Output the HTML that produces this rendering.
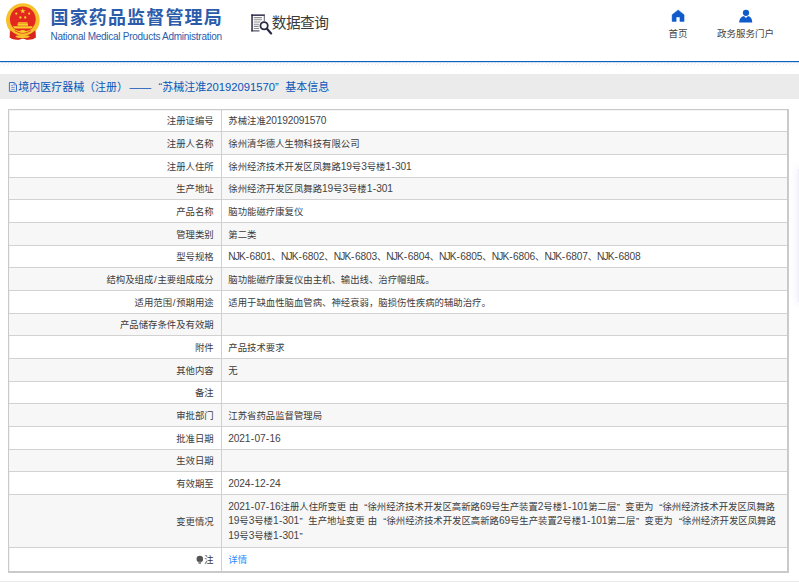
<!DOCTYPE html>
<html lang="zh-CN">
<head>
<meta charset="utf-8">
<title>国家药品监督管理局 数据查询</title>
<style>
html,body{margin:0;padding:0;}
body{width:799px;height:582px;position:relative;overflow:hidden;background:#fff;font-family:"Liberation Sans","Noto Sans CJK SC",sans-serif;color:#3a3a3a;}
.abs{position:absolute;white-space:nowrap;}
#title{left:50.5px;top:6.2px;font-size:18px;font-weight:bold;color:#2b5caa;line-height:24px;letter-spacing:1.15px;}
#sub{left:50.6px;top:31px;font-size:10px;color:#2b5caa;line-height:12px;letter-spacing:-0.265px;}
#dq{left:271.8px;top:12.5px;font-size:14.7px;letter-spacing:-0.55px;color:#3a3a3a;line-height:20px;}
.nav{font-size:9.5px;color:#444;line-height:12px;text-align:center;}
#blueline{left:0;top:61px;width:799px;height:1px;background:#0e5fbf;box-shadow:0 1px 0 rgba(14,95,191,0.2);}
#hatch{left:0;top:62px;}
#bar{left:0;top:74px;width:799px;height:25px;background:#ebebeb;}
.bt{top:79px;font-size:10.97px;line-height:16px;color:#0a56b8;}
#tbl{left:8px;top:109px;width:781px;height:464px;box-sizing:border-box;border-style:solid;border-color:#cbc9cb;border-width:1px 2px 2px 1px;box-shadow:inset 1px 1px 0 #f3f3f3;}
.row{position:absolute;left:9px;width:778px;box-sizing:border-box;border-top:1px solid #d2d2d2;}
.row.alt{background:#f7f7f7;}
.lab{position:absolute;left:0;width:204.7px;text-align:right;font-size:9.4px;white-space:nowrap;color:#3b3b3b;}
.val{position:absolute;left:219.3px;font-size:9.4px;white-space:nowrap;color:#3b3b3b;}
#vline{left:221px;top:109px;width:1px;height:462px;background:#d0d0d0;}
.n{font-size:10.2px;letter-spacing:-0.17px;color:#444;}
.l{font-size:10.2px;letter-spacing:-0.85px;color:#444;}
.l + .n .h{margin:0 0.7px;}
.h{font-style:normal;margin:0 0.45px;}
.sl{font-size:9.8px;margin:0 0.7px;}
.ql{padding-left:3px;}
.qr{padding-left:0.5px;padding-right:2.4px;}
#side{left:798px;top:169px;width:20px;height:133px;background:#efeffb;box-shadow:0 0 8px rgba(90,90,200,0.13);}
#botline{left:0;top:581px;width:799px;height:1px;background:#ebebeb;}
</style>
</head>
<body>
<svg class="abs" style="left:4px;top:1px" width="40" height="42" viewBox="0 0 40 42">
<path d="M6 28.5 L5.7 36.6 L9 38.2 L14.5 38.7 L18.8 37.6 L23.1 38.7 L28.6 38.2 L31.7 36.6 L31.5 28.5 Z" fill="#d8241c"/>
<circle cx="18.85" cy="19.1" r="16.85" fill="#f6c12a"/>
<path d="M6.6 29.5 Q18.8 40 31 29.5 L31.6 36.4 L28.6 38 L23.1 38.5 L18.8 37.4 L14.5 38.5 L9 38 L5.8 36.4 Z" fill="#d8241c"/>
<circle cx="18.8" cy="18.3" r="12.9" fill="#e3291f"/>
<polygon points="18.8,7.1 19.5,9.2 21.7,9.2 19.9,10.5 20.6,12.6 18.8,11.3 17,12.6 17.7,10.5 15.9,9.2 18.1,9.2" fill="#f8cf2c"/>
<circle cx="12.3" cy="12.6" r="1.15" fill="#f8cf2c"/><circle cx="25.2" cy="12.6" r="1.15" fill="#f8cf2c"/>
<circle cx="16.4" cy="16.5" r="1.15" fill="#f8cf2c"/><circle cx="21.2" cy="16.5" r="1.15" fill="#f8cf2c"/>
<path d="M14.5 21.2 h8.6 l0.9 1.3 h-10.4 z M13.6 22.8 h10.4 v2 h-10.4 z M9 25.3 h19.6 l-1.2 2.1 h-17.2 z" fill="#f8cf2c"/>
<path d="M7.4 25.6 Q18.8 40.5 30.2 25.6 L28.4 27.9 Q18.8 32.4 9.2 27.9 Z" fill="#f6c12a"/>
<path d="M10.6 29.6 Q18.8 35 27 29.6" fill="none" stroke="#e0301f" stroke-width="0.8"/>
<path d="M15.4 30.4 q3.4 -2.6 6.8 0 q-3.4 2.4 -6.8 0z" fill="#f8cf2c"/>
<ellipse cx="18.6" cy="35.6" rx="7.2" ry="1.5" fill="#f6c12a"/>
<ellipse cx="18.6" cy="35.6" rx="2.2" ry="1.9" fill="#f6c12a"/>
</svg>
<div class="abs" id="title">国家药品监督管理局</div>
<div class="abs" id="sub">National Medical Products Administration</div>
<svg class="abs" style="left:250px;top:13px" width="24" height="23" viewBox="0 0 24 23">
<rect x="1.3" y="1.4" width="1.5" height="17" fill="#2b2b47"/>
<rect x="1.3" y="1.4" width="13.3" height="1.5" fill="#2b2b47"/>
<rect x="13.8" y="1.4" width="0.9" height="6.6" fill="#4a4a5e"/>
<rect x="1.3" y="17.4" width="8.2" height="1" fill="#2b2b47"/>
<path d="M3.8 4.6 h8.1 M3.8 6.8 h8.1 M3.8 9 h6.6 M3.8 11.2 h5.2 M3.8 13.4 h4.9 M3.8 15.5 h5.4" stroke="#8e8e8e" stroke-width="1.1"/>
<circle cx="14.1" cy="12.7" r="3.65" fill="#fff" stroke="#2b2b47" stroke-width="1.8"/>
<path d="M17 15.8 L21.1 20.4" stroke="#2b2b47" stroke-width="2.3" stroke-linecap="round"/>
</svg>
<div class="abs" id="dq">数据查询</div>
<svg class="abs" style="left:671px;top:9px" width="14" height="14" viewBox="0 0 14 14">
<path d="M7.1 0.9 L13.1 5.7 V12.5 H8.9 V8.1 H5.2 V12.5 H1.1 V5.7 Z" fill="#0f5bcb" stroke="#0f5bcb" stroke-width="0.4" stroke-linejoin="round"/>
</svg>
<div class="abs nav" style="left:648px;width:60px;top:28px">首页</div>
<svg class="abs" style="left:738px;top:8px" width="16" height="16" viewBox="0 0 16 16">
<circle cx="8" cy="4.8" r="3.15" fill="#0f5bcb"/>
<path d="M1.1 14.5 Q1.6 8.6 5.9 7.9 L8 10 L10 7.9 Q14 8.6 14.3 14.5 Z" fill="#0f5bcb"/>
</svg>
<div class="abs nav" style="left:705.6px;width:80px;top:28px">政务服务门户</div>
<div class="abs" id="blueline"></div><svg class="abs" id="hatch" width="799" height="4" viewBox="0 0 799 4"><defs><pattern id="hp" width="3.4" height="4" patternUnits="userSpaceOnUse"><path d="M0.4 3.4 L2.6 1" stroke="#e2e2e2" stroke-width="0.7" fill="none"/></pattern></defs><rect width="799" height="4" fill="url(#hp)"/></svg>
<div class="abs" id="bar"></div>
<svg class="abs" style="left:8px;top:81px" width="10" height="12" viewBox="0 0 10 12">
<path d="M1.4 1.5 H6.1 L8.5 3.9 V10.4 H1.4 Z" fill="none" stroke="#3a72d2" stroke-width="1"/>
<path d="M6 1.6 V4 H8.4" fill="none" stroke="#3a72d2" stroke-width="0.7"/>
<path d="M3.2 4.4 h2 M3.2 6.4 h3.6 M3.2 8.4 h3.6" stroke="#5a7fd0" stroke-width="0.8"/>
</svg>
<div class="abs bt" style="left:18.3px">境内医疗器械（注册）</div><div class="abs bt" style="left:129.4px">——</div><div class="abs bt" style="left:158.6px">“苏械注准<span style="font-size:11.25px">20192091570</span>”</div><div class="abs bt" style="left:285.3px">基本信息</div>
<div class="abs" id="tbl"></div>
<div class="row" style="top:109px;height:22px;border-top-color:transparent;"><div class="lab" style="top:0;line-height:22px">注册证编号</div><div class="val" style="top:0;line-height:22px">苏械注准<span class="n">20192091570</span></div></div>
<div class="row alt" style="top:131px;height:23px;"><div class="lab" style="top:0;line-height:23px">注册人名称</div><div class="val" style="top:0;line-height:23px">徐州清华德人生物科技有限公司</div></div>
<div class="row" style="top:154px;height:23px;"><div class="lab" style="top:0;line-height:23px">注册人住所</div><div class="val" style="top:0;line-height:23px">徐州经济技术开发区凤舞路<span class="n">19</span>号<span class="n">3</span>号楼<span class="n">1<i class="h">-</i>301</span></div></div>
<div class="row alt" style="top:177px;height:22px;"><div class="lab" style="top:0;line-height:22px">生产地址</div><div class="val" style="top:0;line-height:22px">徐州经济开发区凤舞路<span class="n">19</span>号<span class="n">3</span>号楼<span class="n">1<i class="h">-</i>301</span></div></div>
<div class="row" style="top:199px;height:23px;"><div class="lab" style="top:0;line-height:23px">产品名称</div><div class="val" style="top:0;line-height:23px">脑功能磁疗康复仪</div></div>
<div class="row alt" style="top:222px;height:23px;"><div class="lab" style="top:0;line-height:23px">管理类别</div><div class="val" style="top:0;line-height:23px">第二类</div></div>
<div class="row" style="top:245px;height:22px;"><div class="lab" style="top:0;line-height:22px">型号规格</div><div class="val" style="top:0;line-height:22px"><span class="l">NJK</span><span class="n"><i class="h">-</i>6801</span>、<span class="l">NJK</span><span class="n"><i class="h">-</i>6802</span>、<span class="l">NJK</span><span class="n"><i class="h">-</i>6803</span>、<span class="l">NJK</span><span class="n"><i class="h">-</i>6804</span>、<span class="l">NJK</span><span class="n"><i class="h">-</i>6805</span>、<span class="l">NJK</span><span class="n"><i class="h">-</i>6806</span>、<span class="l">NJK</span><span class="n"><i class="h">-</i>6807</span>、<span class="l">NJK</span><span class="n"><i class="h">-</i>6808</span></div></div>
<div class="row alt" style="top:267px;height:23px;"><div class="lab" style="top:0;line-height:23px">结构及组成<span class="sl">/</span>主要组成成分</div><div class="val" style="top:0;line-height:23px">脑功能磁疗康复仪由主机、输出线、治疗帽组成。</div></div>
<div class="row" style="top:290px;height:23px;"><div class="lab" style="top:0;line-height:23px">适用范围<span class="sl">/</span>预期用途</div><div class="val" style="top:0;line-height:23px">适用于缺血性脑血管病、神经衰弱，脑损伤性疾病的辅助治疗。</div></div>
<div class="row alt" style="top:313px;height:22px;"><div class="lab" style="top:0;line-height:22px">产品储存条件及有效期</div><div class="val" style="top:0;line-height:22px"></div></div>
<div class="row" style="top:335px;height:23px;"><div class="lab" style="top:0;line-height:23px">附件</div><div class="val" style="top:0;line-height:23px">产品技术要求</div></div>
<div class="row alt" style="top:358px;height:23px;"><div class="lab" style="top:0;line-height:23px">其他内容</div><div class="val" style="top:0;line-height:23px">无</div></div>
<div class="row" style="top:381px;height:22px;"><div class="lab" style="top:0;line-height:22px">备注</div><div class="val" style="top:0;line-height:22px"></div></div>
<div class="row alt" style="top:403px;height:23px;"><div class="lab" style="top:0;line-height:23px">审批部门</div><div class="val" style="top:0;line-height:23px">江苏省药品监督管理局</div></div>
<div class="row" style="top:426px;height:23px;"><div class="lab" style="top:0;line-height:23px">批准日期</div><div class="val" style="top:0;line-height:23px"><span class="n">2021<i class="h">-</i>07<i class="h">-</i>16</span></div></div>
<div class="row alt" style="top:449px;height:22px;"><div class="lab" style="top:0;line-height:22px">生效日期</div><div class="val" style="top:0;line-height:22px"></div></div>
<div class="row" style="top:471px;height:23px;"><div class="lab" style="top:0;line-height:23px">有效期至</div><div class="val" style="top:0;line-height:23px"><span class="n">2024<i class="h">-</i>12<i class="h">-</i>24</span></div></div>
<div class="row alt" style="top:494px;height:53px;"><div class="lab" style="top:0;line-height:53px">变更情况</div><div class="val" style="top:4.9px;line-height:14.4px;word-spacing:0.3px"><span class="n">2021<i class="h">-</i>07<i class="h">-</i>16</span>注册人住所变更 由 <span class="ql">“</span>徐州经济技术开发区高新路<span class="n">69</span>号生产装置<span class="n">2</span>号楼<span class="n">1<i class="h">-</i>101</span>第二层<span class="qr">”</span> 变更为 <span class="ql">“</span>徐州经济技术开发区凤舞路<br><span style="word-spacing:0.6px"><span class="n">19</span>号<span class="n">3</span>号楼<span class="n">1<i class="h">-</i>301</span><span class="qr">”</span> 生产地址变更 由 <span class="ql">“</span>徐州经济技术开发区高新路<span class="n">69</span>号生产装置<span class="n">2</span>号楼<span class="n">1<i class="h">-</i>101</span>第二层<span class="qr">”</span> 变更为 <span class="ql">“</span>徐州经济开发区凤舞路</span><br><span class="n">19</span>号<span class="n">3</span>号楼<span class="n">1<i class="h">-</i>301</span><span class="qr">”</span></div></div>
<div class="row" style="top:547px;height:24px;"><div class="lab" style="top:0;line-height:24px"><svg width="8" height="10" viewBox="0 0 8 10" style="vertical-align:-2.1px;margin-right:0.3px"><circle cx="3.8" cy="3.9" r="3.25" fill="#555"/><path d="M2.3 6.4 h3 l-0.4 2.6 h-2.2 z" fill="#8a8a8a"/></svg>注</div><div class="val" style="top:0;line-height:24px;color:#2b8cff">详情</div></div>
<div class="abs" id="vline"></div>
<div class="abs" id="side"></div><div class="abs" id="botline"></div>
</body>
</html>
